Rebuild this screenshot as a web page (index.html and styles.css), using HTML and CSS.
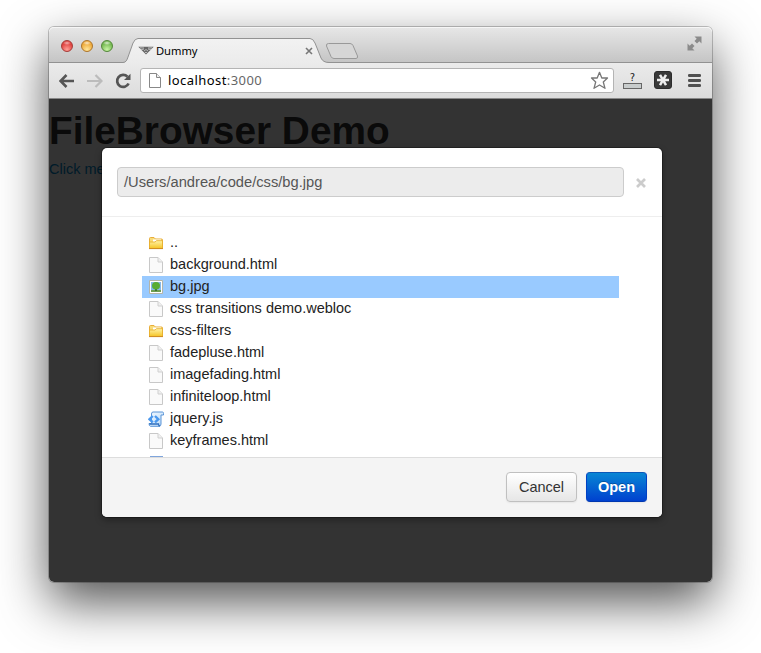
FILE: index.html
```html
<!DOCTYPE html>
<html lang="en">
<head>
<meta charset="utf-8">
<title>Dummy</title>
<link rel="stylesheet" href="styles.css">
</head>
<body>
<svg width="0" height="0" class="defs" aria-hidden="true">
  <defs>
    <linearGradient id="gold" x1="0" y1="0" x2="0" y2="1"><stop offset="0" stop-color="#fff3a8"/><stop offset="1" stop-color="#f5c424"/></linearGradient>
    <linearGradient id="tabfill" x1="0" y1="0" x2="0" y2="1"><stop offset="0" stop-color="#f2f2f2"/><stop offset="1" stop-color="#ebebeb"/></linearGradient>
    <linearGradient id="scroll" x1="0" y1="0" x2="1" y2="1"><stop offset="0" stop-color="#f4faff"/><stop offset="1" stop-color="#b9d9f8"/></linearGradient>
    <symbol id="folder" viewBox="0 0 16 16">
      <path d="M1.500 13V3.500q0-1 1-1H6L7.500 4H13.500q1 0 1 1V13z" fill="#f9dc78" stroke="#e8ad3a"/>
      <path d="M5 4.500H13V7H5z" fill="#fff"/>
      <path d="M1.500 7H7L8.500 5.700H14.500V13.500H1.500z" fill="url(#gold)" stroke="#e9b02c" stroke-width=".9"/>
      <path d="M1 13.600H15" stroke="#cf8b20"/>
    </symbol>
    <symbol id="page" viewBox="0 0 16 16">
      <path d="M1.500.5H10L14.500 5V15.500H1.500z" fill="#fafafa" stroke="#c8c8c8"/>
      <path d="M10 .5V5H14.500" fill="#f0f0f0" stroke="#d0d0d0"/>
    </symbol>
    <symbol id="image" viewBox="0 0 16 16">
      <path d="M1.500 1.500H14.500V14.500H1.500z" fill="#fff" stroke="#b4b4a8"/>
      <path d="M3 3H13V13H3z" fill="#86b8e8"/>
      <path d="M3 11H13V13H3z" fill="#6f9f52"/>
      <path d="M7 9H9V12H7z" fill="#3d7130"/>
      <ellipse cx="8" cy="6.800" rx="4" ry="3.800" fill="#58ac32"/>
    </symbol>
    <symbol id="script" viewBox="0 0 16 16">
      <path d="M5 1H14.500Q15.500 1 15.500 2.500V4H13V13Q13 15.300 11 15.300H2.500Q1 15 1 12.500H3.500V3Q3.500 1 5 1z" fill="url(#scroll)" stroke="#5b94d6"/>
      <path d="M1.500 13H10.500Q10.500 15 12 15" fill="none" stroke="#2f6fbe" stroke-width="1.300"/>
      <path d="M4.800 5L1.500 8.200L4.800 11.400M7 5L10.300 8.200L7 11.400" fill="none" stroke="#4a98ee" stroke-width="2.400"/>
    </symbol>
  </defs>
</svg>
<div class="window">
  <div class="tabstrip">
    <div class="lights"><i class="red"></i><i class="amber"></i><i class="green"></i></div>
    <div class="tab">
      <svg class="tab-shape" width="206" height="26" viewBox="0 0 206 26"><path d="M0 24.500C3 24.500 4 22 5 19L10 5Q12 .5 15 .5H187Q190 .5 192 5L198 20Q200 24.500 206 24.500V26H0z" fill="url(#tabfill)"/><path d="M0 24.500C3 24.500 4 22 5 19L10 5Q12 .5 15 .5H187Q190 .5 192 5L198 20Q200 24.500 206 24.500" fill="none" stroke="#929292"/></svg>
      <svg class="favicon" width="16" height="9" viewBox="0 0 16 9"><path d="M.3.800H15.700L8 8.500z" fill="#666"/><path d="M2 1.800L6 2M10 2L14 1.800M3 3.800L6 3M13 3.800L10 3M6 5L8 3.500L10 5M7 6.500H9" stroke="#ddd" stroke-width=".7" fill="none"/></svg>
      <span class="tab-title">Dummy</span>
      <svg class="tab-close" width="8" height="8" viewBox="0 0 8 8"><path d="M1 1L7 7M7 1L1 7" stroke="#777" stroke-width="1.600"/></svg>
    </div>
    <svg class="newtab" width="34" height="18" viewBox="0 0 34 18"><path d="M3.500 1.500H25Q27 1.500 28 3.500L32.500 14Q33 16.500 31 16.500H9Q7 16.500 6 14.500L1.500 4Q1 1.500 3.500 1.500z" fill="#d6d6d6" stroke="#999"/></svg>
    <svg class="expand" width="15" height="15" viewBox="0 0 15 15"><path d="M7.500.5H14.500V7.500L12.300 5.300L10 7.500L7.500 5L9.700 2.700zM.5 7.500L2.700 9.700L5 7.500L7.500 10L5.300 12.300L7.500 14.500H.5z" fill="#8b8b8b"/></svg>
  </div>
  <div class="toolbar">
    <svg width="16" height="14" viewBox="0 0 16 14"><path d="M7.500 1L1.500 7L7.500 13M2 7H15" fill="none" stroke="#555" stroke-width="2.600"/></svg>
    <svg class="fwd" width="16" height="14" viewBox="0 0 16 14"><path d="M8.500 1L14.500 7L8.500 13M14 7H0" fill="none" stroke="#bcbcbc" stroke-width="2.200"/></svg>
    <svg class="reload" width="17" height="16" viewBox="0 0 17 16"><path d="M12.500 3.800A6 6 0 1 0 13.600 10.500" fill="none" stroke="#555" stroke-width="2.700"/><path d="M15.500.8V7H9z" fill="#555"/></svg>
    <div class="omnibox">
      <svg width="12" height="15" viewBox="0 0 12 15"><path d="M.5.500H7.500L11.500 4.500V14.500H.5z" fill="#fff" stroke="#888"/><path d="M7.500.500V4.500H11.500" fill="#eee" stroke="#888"/></svg>
      <span class="url">localhost<span class="port">:3000</span></span>
      <svg class="star" width="20" height="19" viewBox="0 0 20 19"><path d="M10.500 1.300L12.800 7H18.500L14.300 11L16 17.300L10.500 14L5 17.300L6.700 11L2.500 7H8.200z" fill="#fff" stroke="#777" stroke-width="1.300" stroke-linejoin="round"/></svg>
    </div>
    <div class="ext"><span>?</span><i></i></div>
    <svg class="aster" width="18" height="18" viewBox="0 0 18 18"><rect x=".5" y=".5" width="17" height="17" rx="2.500" fill="#393939" stroke="#2c2c2c"/><path d="M3 9H15M6 3.800L12 14.200M12 3.800L6 14.200" stroke="#eee" stroke-width="2.500"/></svg>
    <svg class="menu" width="13" height="13" viewBox="0 0 13 13"><path d="M1.300 1.500H11.700M1.300 6.500H11.700M1.300 11.500H11.700" stroke="#505050" stroke-width="2.800" stroke-linecap="round"/></svg>
  </div>
  <div class="page">
    <h1>FileBrowser Demo</h1>
    <a class="link">Click me</a>
    <div class="backdrop"></div>
  </div>
  <div class="modal">
    <div class="modal-head">
      <div class="path">/Users/andrea/code/css/bg.jpg</div>
      <svg class="close" width="10" height="10" viewBox="0 0 10 10"><path d="M1 1L9 9M9 1L1 9" stroke="#ccc" stroke-width="2.700"/></svg>
    </div>
    <div class="modal-body">
      <ul>
        <li><svg><use href="#folder"/></svg>..</li>
        <li><svg><use href="#page"/></svg>background.html</li>
        <li class="selected"><svg><use href="#image"/></svg>bg.jpg</li>
        <li><svg><use href="#page"/></svg>css transitions demo.webloc</li>
        <li><svg><use href="#folder"/></svg>css-filters</li>
        <li><svg><use href="#page"/></svg>fadepluse.html</li>
        <li><svg><use href="#page"/></svg>imagefading.html</li>
        <li><svg><use href="#page"/></svg>infiniteloop.html</li>
        <li><svg><use href="#script"/></svg>jquery.js</li>
        <li><svg><use href="#page"/></svg>keyframes.html</li>
      </ul>
      <div class="next-icon"></div>
    </div>
    <div class="modal-foot"><button>Cancel</button><button class="primary">Open</button></div>
  </div>
</div>
</body>
</html>
```
FILE: styles.css
```css
* { box-sizing: border-box; }
body { margin: 0; width: 761px; height: 653px; overflow: hidden; background: #fff; font-family: "Liberation Sans", Arial, sans-serif; font-size: 14.5px; color: #333; }
svg { display: block; flex: none; }
.defs { position: absolute; }
.window { position: relative; display: flex; flex-direction: column; width: 663px; height: 555px; margin: 27px 0 0 49px; border-radius: 5px; box-shadow: 0 0 0 1px rgba(0,0,0,.22), 0 20px 50px rgba(0,0,0,.68); }
.tabstrip { height: 36px; display: flex; align-items: flex-end; background: linear-gradient(#e7e7e7, #c5c5c5); border-bottom: 1px solid #929292; border-radius: 5px 5px 0 0; box-shadow: inset 0 1px #f6f6f6; }
.lights { display: flex; gap: 8px; padding: 0 0 10px 12px; width: 74px; }
.lights i { width: 12px; height: 12px; border-radius: 50%; border: 1px solid; }
.red { background: radial-gradient(ellipse 4px 2px at 50% 20%, #fff9, transparent), radial-gradient(circle at 50% 85%, #ff9e96, #e0423f 65%); border-color: #a63b37 !important; }
.amber { background: radial-gradient(ellipse 4px 2px at 50% 20%, #fffb, transparent), radial-gradient(circle at 50% 85%, #ffe69a, #eeaa3a 65%); border-color: #ad7429 !important; }
.green { background: radial-gradient(ellipse 4px 2px at 50% 20%, #fffb, transparent), radial-gradient(circle at 50% 85%, #c9f5a5, #75b951 65%); border-color: #538739 !important; }
.tab { position: relative; width: 206px; height: 25px; margin-bottom: -1px; display: flex; align-items: center; padding: 0 16px 0 15px; }
.tab-shape { position: absolute; left: 0; top: 0; }
.favicon, .tab-title, .tab-close { position: relative; }
.tab-title { font: 11.2px "Noto Sans", sans-serif; color: #000; margin-left: 2px; flex: 1; }
.newtab { margin: 0 0 2px -4px; }
.expand { margin: 0 10px 11px auto; }
.toolbar { height: 36px; display: flex; align-items: center; padding: 0 11px 0 10px; background: linear-gradient(#ebebeb, #dcdcdc); border-bottom: 1px solid #888; }
.fwd { margin-left: 12px; }
.reload { margin-left: 12px; }
.omnibox { width: 474px; height: 25px; margin-left: 8px; display: flex; align-items: center; padding: 0 4px 0 8px; background: #fff; border: 1px solid #b4b4b4; border-radius: 3px; }
.url { margin-left: 7px; flex: 1; font: 13px/18px "Noto Sans", sans-serif; letter-spacing: .43px; margin-top: -2px; color: #000; }
.port { color: #666; }
.tab-title { letter-spacing: -.05px; }
.ext { width: 19px; margin-left: 9px; display: flex; flex-direction: column; align-items: center; font: 10px/10px "DejaVu Sans", sans-serif; color: #222; }
.ext i { width: 19px; height: 6px; border: 1px solid #666; background: #c8cccc; }
.aster { margin: -2px 0 0 12px; }
.menu { margin-left: 16px; }
.page { position: relative; flex: 1; background: #fff; border-radius: 0 0 5px 5px; overflow: hidden; }
h1 { margin: 12px 0 0; font-size: 38.8px; line-height: 40px; color: #333; }
.link { display: block; margin-top: 8px; line-height: 20px; color: #08c; }
.backdrop { position: absolute; inset: 0; background: rgba(0,0,0,.8); }
.modal { position: absolute; left: 53px; top: 121px; width: 560px; height: 369px; display: flex; flex-direction: column; background: #fff; border-radius: 5px; overflow: hidden; box-shadow: 0 0 0 1px rgba(0,0,0,.3), 0 3px 7px rgba(0,0,0,.35); }
.modal-head { height: 69px; display: flex; align-items: center; padding: 0 15px; border-bottom: 1px solid #eee; }
.path { width: 507px; height: 30px; padding: 0 6px; line-height: 28px; border: 1px solid #ccc; border-radius: 4px; background: #ececec; color: #555; font-size: 14.7px; }
.close { margin-left: 12px; margin-top: 1px; }
.modal-body { position: relative; height: 240px; padding: 15px 43px 0 40px; overflow: hidden; }
ul { list-style: none; margin: 0; padding: 0; height: 220px; }
ul { margin-top: -1px; }
li { height: 22px; display: flex; align-items: center; line-height: 20px; padding: 0 0 0 6px; color: #222; white-space: pre; }
li svg { width: 16px; height: 16px; margin-right: 6px; position: relative; top: 1px; }
.selected { background: linear-gradient(#99caff, #99caff) no-repeat; box-shadow: 0 1px #99caff, inset 0 1px #fff; }
.next-icon { width: 13px; height: 1px; margin: 5px 0 0 8px; background: #7fa5dc; }
.modal-foot { height: 60px; display: flex; align-items: flex-start; justify-content: flex-end; gap: 9px; padding: 14px 15px 0; background: #f4f4f4; border-top: 1px solid #ddd; }
button { font: inherit; width: 71px; height: 30px; padding: 0; color: #333; border: 1px solid #c0c0c0; border-radius: 4px; background: linear-gradient(#fff, #e6e6e6); box-shadow: 0 1px 2px rgba(0,0,0,.06); }
.primary { width: 61px; color: #fff; font-weight: bold; background: linear-gradient(#0886d4, #0041cf); border-color: #0a58b8 #0041c4 #0037b0; text-shadow: 0 -1px 0 rgba(0,0,0,.25); }
```
